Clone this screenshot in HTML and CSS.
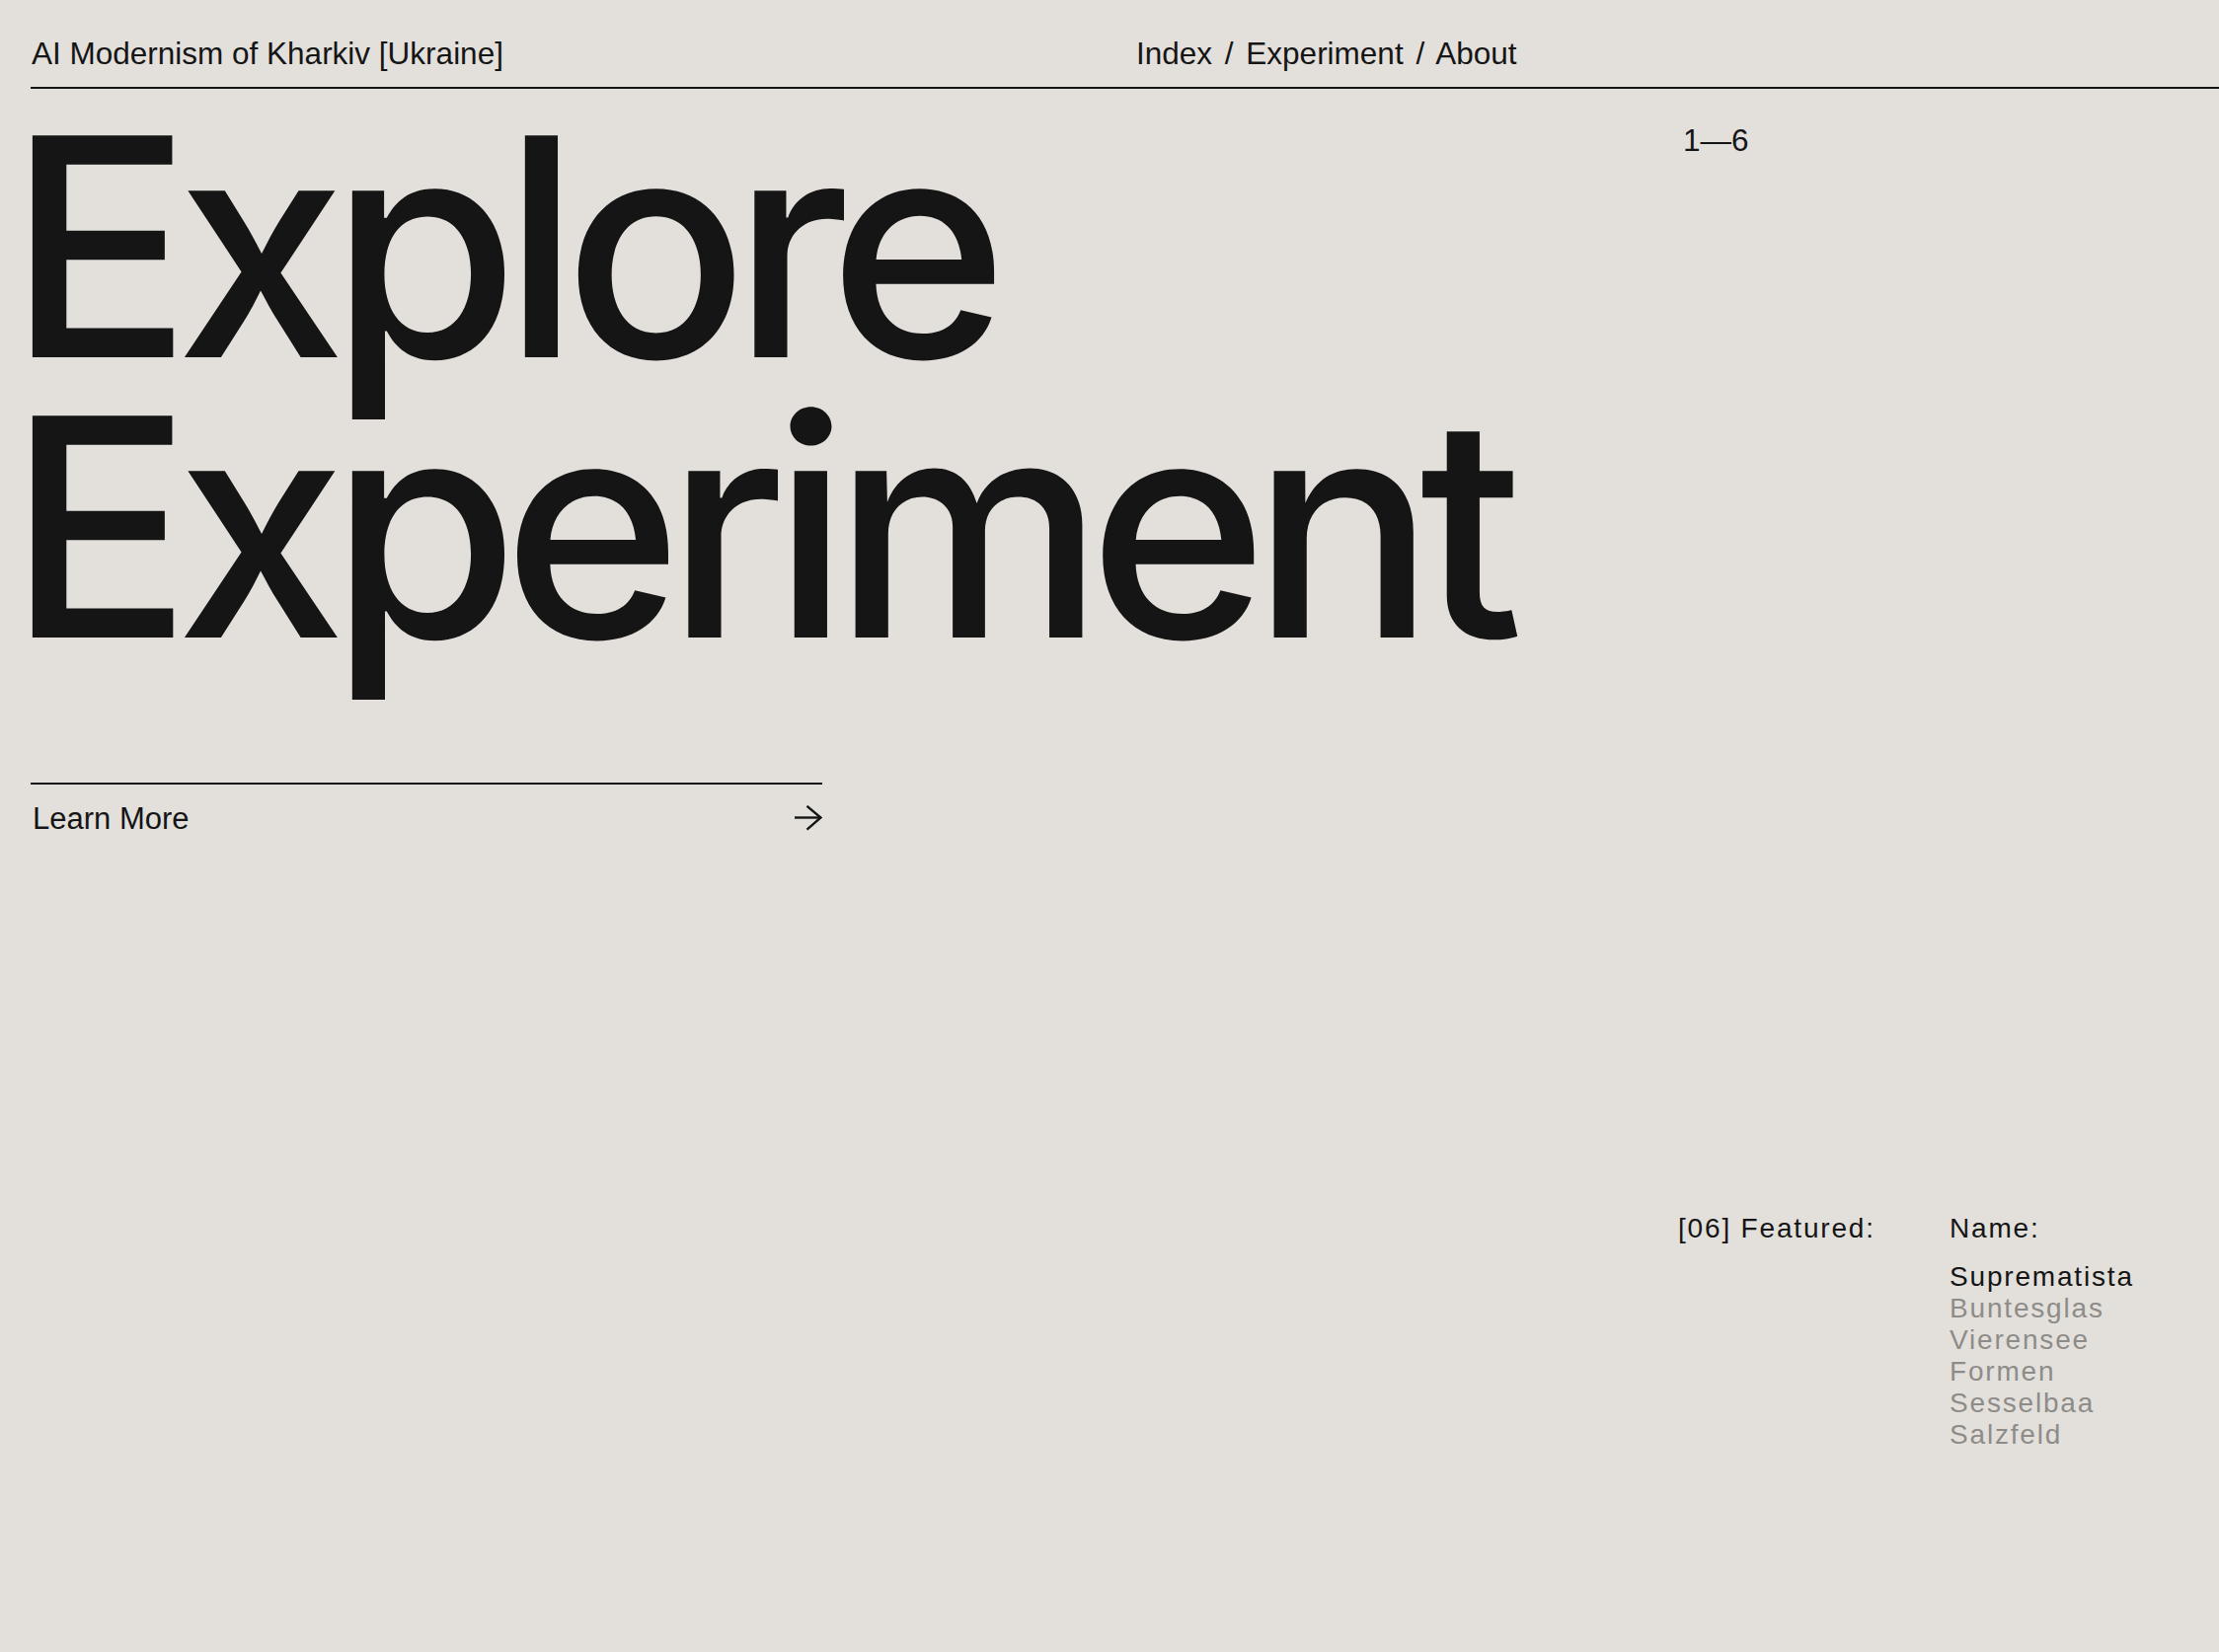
FILE: index.html
```html
<!DOCTYPE html>
<html lang="en">
<head>
    <meta charset="UTF-8">
    <meta name="viewport" content="width=device-width, initial-scale=1.0">
    <title>AI Modernism of Kharkiv</title>
    <link rel="stylesheet" href="styles.css">
</head>
<body>
<header class="topbar">
    <div class="brand">AI Modernism of Kharkiv [Ukraine]</div>
    <nav class="menu">
        <a href="#">Index</a> / <a href="#">Experiment</a> / <a href="#">About</a>
    </nav>
</header>

<main class="hero">
    <section class="hero-main">
        <h1 class="title">Explore<br>Experiment</h1>
        <a href="#" class="learn-more">
            <span>Learn More</span>
            <svg class="arrow" width="28" height="26" viewBox="0 0 28 26" fill="none" stroke="#151515" stroke-width="2.4">
                <path d="M0 12.5 H26.5"/>
                <path d="M12.5 0.8 L26.5 12.5 L12.5 24.6"/>
            </svg>
        </a>
    </section>

    <aside class="hero-side">
        <div class="counter">1—6</div>

        <!-- featured works -->
        <div class="featured">
            <div class="featured-label">[06] Featured:</div>
            <div class="featured-names">
                <div class="names-head">Name:</div>
                <ul class="names-list">
                    <li class="active">Suprematista</li>
                    <li>Buntesglas</li>
                    <li>Vierensee</li>
                    <li>Formen</li>
                    <li>Sesselbaa</li>
                    <li>Salzfeld</li>
                </ul>
            </div>
        </div>
    </aside>
</main>
</body>
</html>
```

FILE: styles.css
```css
body {
    margin: 0;
    padding: 0;
    background-color: #e3e0dc;
    color: #151515;
    font-family: "Liberation Sans", Arial, sans-serif;
}

a {
    color: inherit;
    text-decoration: none;
}

.topbar {
    display: flex;
    margin-left: 31px;
    padding: 35px 0 15px;
    border-bottom: 2px solid #151515;
    font-size: 31.5px;
    line-height: 38px;
}

.brand {
    width: 1119px;
    padding-left: 1px;
}

.menu {
    word-spacing: 4px;
}

.hero {
    display: grid;
    grid-template-columns: 1669px 1fr;
    padding-left: 31px;
    min-height: 1584px;
}

.title {
    margin: 18px 0 0 -23px;
    font-family: Inter, "Liberation Sans", sans-serif;
    font-weight: 500;
    font-size: 309px;
    line-height: 284px;
    letter-spacing: -16px;
}

.learn-more {
    display: flex;
    align-items: center;
    justify-content: space-between;
    width: 802px;
    margin-top: 117px;
    padding-top: 16px;
    border-top: 2px solid #151515;
    font-size: 31px;
    line-height: 38px;
}

.learn-more span {
    padding-left: 2px;
}

.arrow {
    margin-top: -3px;
}

.hero-side {
    display: flex;
    flex-direction: column;
    padding-bottom: 204px;
}

.counter {
    margin-top: 33px;
    padding-left: 5px;
    font-size: 31.5px;
    line-height: 38px;
}

.featured {
    display: flex;
    margin-top: auto;
    font-size: 28px;
    line-height: 32px;
    letter-spacing: 0.065em;
}

.featured-label {
    width: 275px;
}

.names-head {
    margin-bottom: 17px;
}

.names-list {
    list-style: none;
    margin: 0;
    padding: 0;
    color: #8e8c89;
}

.names-list .active {
    color: #151515;
}
```
